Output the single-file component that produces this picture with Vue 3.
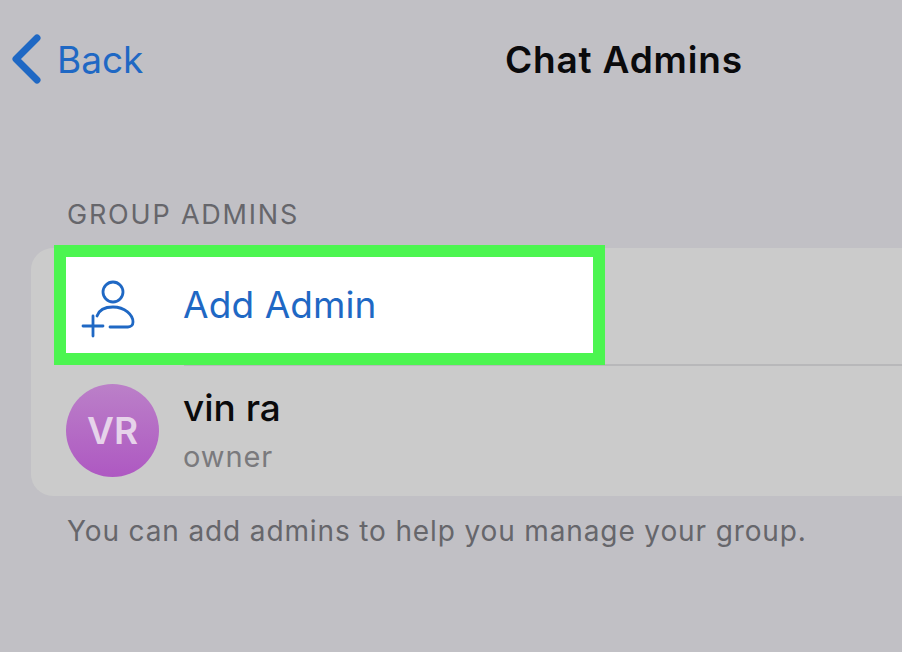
<template>
    <div class="screen">
        <header class="nav">
            <div class="back">
                <svg class="chevron" width="32" height="52" viewBox="0 0 32 52" fill="none">
                    <path d="M28 5 L7 26 L28 47" stroke="#1f68c4" stroke-width="7" stroke-linecap="round"
                        stroke-linejoin="round" />
                </svg>
                <span class="back-label">Back</span>
            </div>
            <h1 class="title">Chat Admins</h1>
        </header>

        <div class="section-label">GROUP ADMINS</div>

        <section class="card">
            <div class="row add-row">
                <div class="highlight"></div>
                <svg class="add-icon" width="56" height="64" viewBox="0 0 56 64" fill="none" stroke="#1f68c4"
                    stroke-width="2.8" stroke-linecap="round">
                    <circle cx="32" cy="18" r="10" />
                    <path d="M16 42 C18 36 24 33 32 33 C44 33 52 41 52 48 C52 51 50 53 47 53 L29 53" />
                    <path d="M2 52 H22 M12 42 V62" />
                </svg>
                <span class="add-label">Add Admin</span>
            </div>
            <div class="row member-row">
                <div class="avatar">VR</div>
                <div class="member-text">
                    <div class="member-name">{{ member.name }}</div>
                    <div class="member-role">{{ member.role }}</div>
                </div>
            </div>
        </section>

        <p class="hint">You can add admins to help you manage your group.</p>
    </div>
</template>

<script setup>
const member = { name: 'vin ra', role: 'owner' };
</script>

<style>
html,
body {
    margin: 0;
    background: #c1c0c5;
}
</style>

<style scoped>
.screen {
    width: 902px;
    height: 652px;
    overflow: hidden;
    box-sizing: border-box;
    background: #c1c0c5;
    font-family: Inter, "Liberation Sans", sans-serif;
}

.nav {
    display: flex;
    align-items: center;
    height: 52px;
    padding: 33px 0 0 9px;
}

.back {
    display: flex;
    align-items: center;
    gap: 16px;
    width: 496px;
}

.back-label {
    font-size: 37px;
    color: #1f68c4;
}

.title {
    margin: 0;
    font-size: 37px;
    font-weight: 600;
    color: #0a0a0c;
    letter-spacing: 0.8px;
}

.section-label {
    margin: 113px 0 0 67px;
    height: 50px;
    line-height: 34px;
    font-size: 27px;
    color: #66666b;
    letter-spacing: 1.8px;
}

.card {
    margin-left: 31px;
    height: 248px;
    border-radius: 22px 0 0 22px;
    background: #cbcbcb;
}

.row {
    display: flex;
    align-items: center;
    position: relative;
}

.add-row {
    height: 116px;
    padding-left: 50px;
    padding-bottom: 2px;
    gap: 46px;
}

/* separator is inset to the text column */
.add-row::after {
    content: "";
    position: absolute;
    left: 153px;
    right: 0;
    bottom: 0;
    height: 2px;
    background: #b8b8ba;
}

.highlight {
    position: absolute;
    z-index: 1;
    left: 23px;
    top: -3px;
    width: 527px;
    height: 96px;
    background: #fff;
    border: 12px solid #4cf550;
}

.add-icon,
.add-label {
    position: relative;
    z-index: 2;
}

.add-label {
    margin-top: -4px;
    font-size: 37px;
    color: #1f68c4;
    letter-spacing: 0.1px;
}

.member-row {
    height: 129px;
    padding-bottom: 1px;
    padding-left: 35px;
    gap: 24px;
}

.avatar {
    display: flex;
    align-items: center;
    justify-content: center;
    width: 93px;
    height: 93px;
    border-radius: 50%;
    background: linear-gradient(#bb80c8, #ae58c2);
    color: #e6d3ea;
    font-size: 37px;
    font-weight: 600;
}

.member-name {
    font-size: 37px;
    line-height: 42px;
    font-weight: 500;
    color: #0a0a0c;
}

.member-role {
    margin-top: 10px;
    font-size: 29px;
    line-height: 36px;
    color: #7a7a7d;
    letter-spacing: 0.9px;
}

.hint {
    margin: 18px 0 0 67px;
    font-size: 28px;
    line-height: 34px;
    color: #66666b;
    letter-spacing: 0.87px;
    white-space: nowrap;
}
</style>
